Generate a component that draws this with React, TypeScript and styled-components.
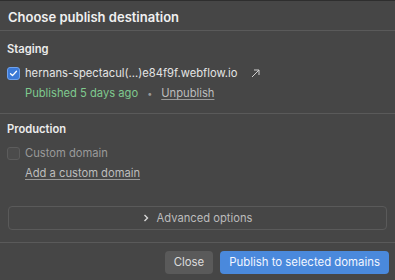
import React from 'react';
import styled, { createGlobalStyle } from 'styled-components';

const Global = createGlobalStyle`
  html, body {
    margin: 0;
    padding: 0;
    background: #464646;
  }
  * { box-sizing: border-box; }
`;

const Dialog = styled.div`
  width: 395px;
  height: 280px;
  background: #464646;
  color: #e6e6e6;
  font-family: Inter, 'Noto Sans', sans-serif;
  font-size: 11px;
  display: flex;
  flex-direction: column;
  border-top: 1px solid #2e2e2e;
`;

const Header = styled.div`
  height: 32px;
  padding: 2px 8px 0;
  display: flex;
  align-items: center;
  font-size: 13px;
  font-weight: 600;
  color: #f0f0f0;
  border-bottom: 1px solid #5a5a5a;
`;

const Section = styled.div<{ $divider?: boolean; $top: number }>`
  padding: ${p => p.$top}px 7px 10px;
  display: flex;
  flex-direction: column;
  border-bottom: ${p => (p.$divider ? '1px solid #5a5a5a' : 'none')};
`;

const SectionTitle = styled.div`
  font-size: 11.2px;
  font-weight: 600;
  color: #ececec;
  height: 18px;
  display: flex;
  align-items: center;
  margin-bottom: 6px;
`;

const Row = styled.div`
  display: flex;
  align-items: center;
  gap: 5px;
  height: 18px;
`;

const Box = styled.span<{ $checked?: boolean }>`
  width: 13px;
  height: 13px;
  border-radius: 3px;
  display: inline-flex;
  align-items: center;
  justify-content: center;
  background: ${p => (p.$checked ? '#3b79d6' : '#4b4b4b')};
  border: 1px solid ${p => (p.$checked ? '#6fa2ee' : '#5c5c5c')};
  flex-shrink: 0;
`;

const Domain = styled.span<{ $muted?: boolean }>`
  color: ${p => (p.$muted ? '#9a9a9a' : '#e4e4e4')};
  font-size: 11.2px;
`;

const ExtIcon = styled.svg`
  margin-left: 9px;
`;

const Meta = styled.div`
  display: flex;
  align-items: center;
  padding-left: 18px;
  height: 21px;
  padding-top: 1px;
  gap: 9px;
  font-size: 11.2px;
`;

const Green = styled.span`
  color: #7fc98e;
`;

const Dot = styled.span`
  color: #999;
  font-size: 9px;
`;

const LinkText = styled.span`
  color: #bdbdbd;
  text-decoration: underline;
  text-underline-offset: 2px;
  text-decoration-color: #9a9a9a;
`;

const AdvancedWrap = styled.div`
  padding: 13px 8px 12px;
  flex: 1;
`;

const Advanced = styled.div`
  height: 24px;
  border: 1px solid #5a5a5a;
  border-radius: 4px;
  display: flex;
  align-items: center;
  justify-content: center;
  gap: 8px;
  color: #bcbcbc;
  font-size: 11.2px;
`;

const Footer = styled.div`
  border-top: 1px solid #5a5a5a;
  height: 40px;
  padding: 1px 6px 0 0;
  display: flex;
  align-items: center;
  justify-content: flex-end;
  gap: 7px;
`;

const Button = styled.button<{ $primary?: boolean }>`
  height: 23px;
  padding: 0 9px;
  border: none;
  border-radius: 4px;
  font-family: Inter, 'Noto Sans', sans-serif;
  font-size: 11.4px;
  color: ${p => (p.$primary ? '#f2f6ff' : '#dcdcdc')};
  background: ${p => (p.$primary ? '#4a89dc' : '#5a5a5a')};
`;

export default function App() {
  return (
    <Dialog>
      <Global />
      <Header>Choose publish destination</Header>
      <Section $divider $top={9}>
        <SectionTitle>Staging</SectionTitle>
        <Row>
          <Box $checked>
            <svg width="9" height="9" viewBox="0 0 9 9">
              <path d="M1.5 4.8 L3.5 6.6 L7.5 2.2" fill="none" stroke="#fff" strokeWidth="1.3" strokeLinecap="round" strokeLinejoin="round" />
            </svg>
          </Box>
          <Domain>hernans-spectacul(...)e84f9f.webflow.io</Domain>
          <ExtIcon width="9" height="9" viewBox="0 0 9 9">
            <path d="M1 8 L8 1 M3 1 H8 V6" fill="none" stroke="#d0d0d0" strokeWidth="1" />
          </ExtIcon>
        </Row>
        <Meta>
          <Green>Published 5 days ago</Green>
          <Dot>•</Dot>
          <LinkText>Unpublish</LinkText>
        </Meta>
      </Section>
      <Section $top={6}>
        <SectionTitle>Production</SectionTitle>
        <Row>
          <Box />
          <Domain $muted>Custom domain</Domain>
        </Row>
        <Meta>
          <LinkText>Add a custom domain</LinkText>
        </Meta>
      </Section>
      <AdvancedWrap>
        <Advanced>
          <svg width="6" height="8" viewBox="0 0 6 8">
            <path d="M1.5 1 L4.5 4 L1.5 7" fill="none" stroke="#d8d8d8" strokeWidth="1.4" />
          </svg>
          Advanced options
        </Advanced>
      </AdvancedWrap>
      <Footer>
        <Button>Close</Button>
        <Button $primary>Publish to selected domains</Button>
      </Footer>
    </Dialog>
  );
}
